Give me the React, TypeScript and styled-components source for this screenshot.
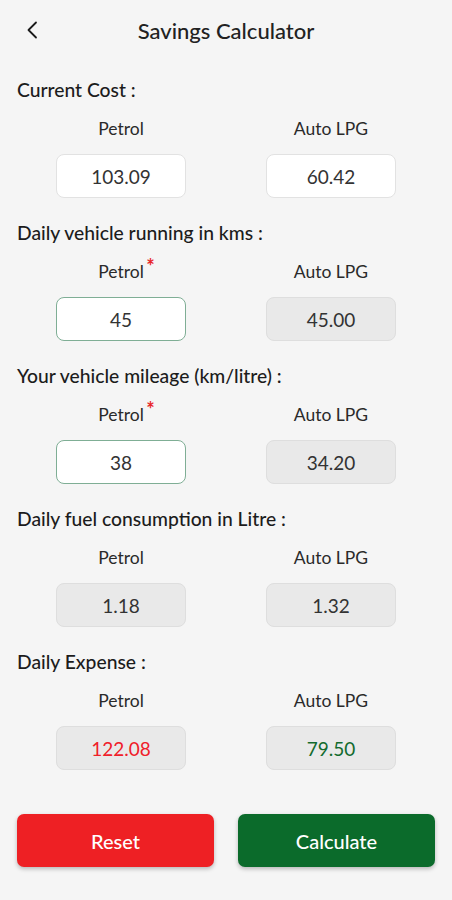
import React from "react";
import styled, { createGlobalStyle } from "styled-components";

const GlobalStyle = createGlobalStyle`
  html, body {
    margin: 0;
    padding: 0;
    background: #f5f5f5;
  }
  body {
    font-family: Lato, "Open Sans", sans-serif;
    color: #1f1f1f;
  }
`;

const Screen = styled.div`
  width: 452px;
  min-height: 900px;
  background: #f5f5f5;
  box-sizing: border-box;
  padding: 0 17px;
`;

const Header = styled.header`
  position: relative;
  height: 62px;
  display: flex;
  align-items: center;
  justify-content: center;
`;

const BackButton = styled.button`
  position: absolute;
  left: 2px;
  top: 17px;
  width: 26px;
  height: 26px;
  padding: 0;
  border: none;
  background: none;
  display: flex;
  align-items: center;
  justify-content: center;
  cursor: pointer;
`;

const Title = styled.h1`
  margin: 0;
  font-size: 22px;
  line-height: 26px;
  font-weight: 500;
  color: #222;
`;

const Section = styled.section`
  padding-top: 16px;
  padding-bottom: 7px;
`;

const SectionLabel = styled.div`
  font-size: 19.3px;
  line-height: 24px;
  font-weight: 500;
  color: #1c1c1c;
`;

const Columns = styled.div`
  display: grid;
  grid-template-columns: 130px 130px;
  column-gap: 80px;
  justify-content: center;
  margin-top: 17px;
`;

const Column = styled.div`
  display: flex;
  flex-direction: column;
  align-items: center;
`;

const ColumnLabel = styled.div`
  position: relative;
  font-size: 17.5px;
  line-height: 20px;
  color: #2a2a2a;
  margin-bottom: 15px;
`;

const Required = styled.span`
  position: absolute;
  right: -11px;
  top: -6px;
  color: #e8262a;
  font-size: 20px;
  font-weight: 700;
`;

type BoxKind = "plain" | "required" | "readonly";

const ValueBox = styled.div<{ $kind: BoxKind; $color?: string }>`
  width: 130px;
  height: 44px;
  box-sizing: border-box;
  border-radius: 8px;
  display: flex;
  align-items: center;
  justify-content: center;
  font-size: 19px;
  color: ${({ $color }) => $color ?? "#333"};
  background: ${({ $kind }) => ($kind === "readonly" ? "#e9e9e9" : "#ffffff")};
  border: 1px solid
    ${({ $kind }) =>
      $kind === "required" ? "#7fae95" : $kind === "readonly" ? "#dedede" : "#e2e2e2"};
`;

const Actions = styled.div`
  display: grid;
  grid-template-columns: 1fr 1fr;
  column-gap: 24px;
  margin-top: 37px;
`;

const ActionButton = styled.button<{ $bg: string }>`
  height: 53px;
  border: none;
  border-radius: 7px;
  background: ${({ $bg }) => $bg};
  color: #fff;
  font-family: Lato, sans-serif;
  font-size: 20px;
  font-weight: 500;
  box-shadow: 0 2px 4px rgba(0, 0, 0, 0.25);
  cursor: pointer;
`;

type Cell = { label: string; value: string; kind: BoxKind; required?: boolean; color?: string };

const sections: { title: string; cells: [Cell, Cell] }[] = [
  {
    title: "Current Cost :",
    cells: [
      { label: "Petrol", value: "103.09", kind: "plain" },
      { label: "Auto LPG", value: "60.42", kind: "plain" },
    ],
  },
  {
    title: "Daily vehicle running in kms :",
    cells: [
      { label: "Petrol", value: "45", kind: "required", required: true },
      { label: "Auto LPG", value: "45.00", kind: "readonly" },
    ],
  },
  {
    title: "Your vehicle mileage (km/litre) :",
    cells: [
      { label: "Petrol", value: "38", kind: "required", required: true },
      { label: "Auto LPG", value: "34.20", kind: "readonly" },
    ],
  },
  {
    title: "Daily fuel consumption in Litre :",
    cells: [
      { label: "Petrol", value: "1.18", kind: "readonly" },
      { label: "Auto LPG", value: "1.32", kind: "readonly" },
    ],
  },
  {
    title: "Daily Expense :",
    cells: [
      { label: "Petrol", value: "122.08", kind: "readonly", color: "#f0202a" },
      { label: "Auto LPG", value: "79.50", kind: "readonly", color: "#136b2e" },
    ],
  },
];

const App = () => (
  <Screen>
    <GlobalStyle />
    <Header>
      <BackButton aria-label="Back">
        <svg width="12" height="18" viewBox="0 0 12 18" fill="none">
          <path d="M10 1.5L2.5 9L10 16.5" stroke="#1a1a1a" strokeWidth="1.8" strokeLinecap="round" strokeLinejoin="round" />
        </svg>
      </BackButton>
      <Title>Savings Calculator</Title>
    </Header>

    {sections.map((s) => (
      <Section key={s.title}>
        <SectionLabel>{s.title}</SectionLabel>
        <Columns>
          {s.cells.map((c) => (
            <Column key={c.label}>
              <ColumnLabel>
                {c.label}
                {c.required && <Required>*</Required>}
              </ColumnLabel>
              <ValueBox $kind={c.kind} $color={c.color}>
                {c.value}
              </ValueBox>
            </Column>
          ))}
        </Columns>
      </Section>
    ))}

    <Actions>
      <ActionButton $bg="#ee2024">Reset</ActionButton>
      <ActionButton $bg="#0b6b2b">Calculate</ActionButton>
    </Actions>
  </Screen>
);

export default App;
